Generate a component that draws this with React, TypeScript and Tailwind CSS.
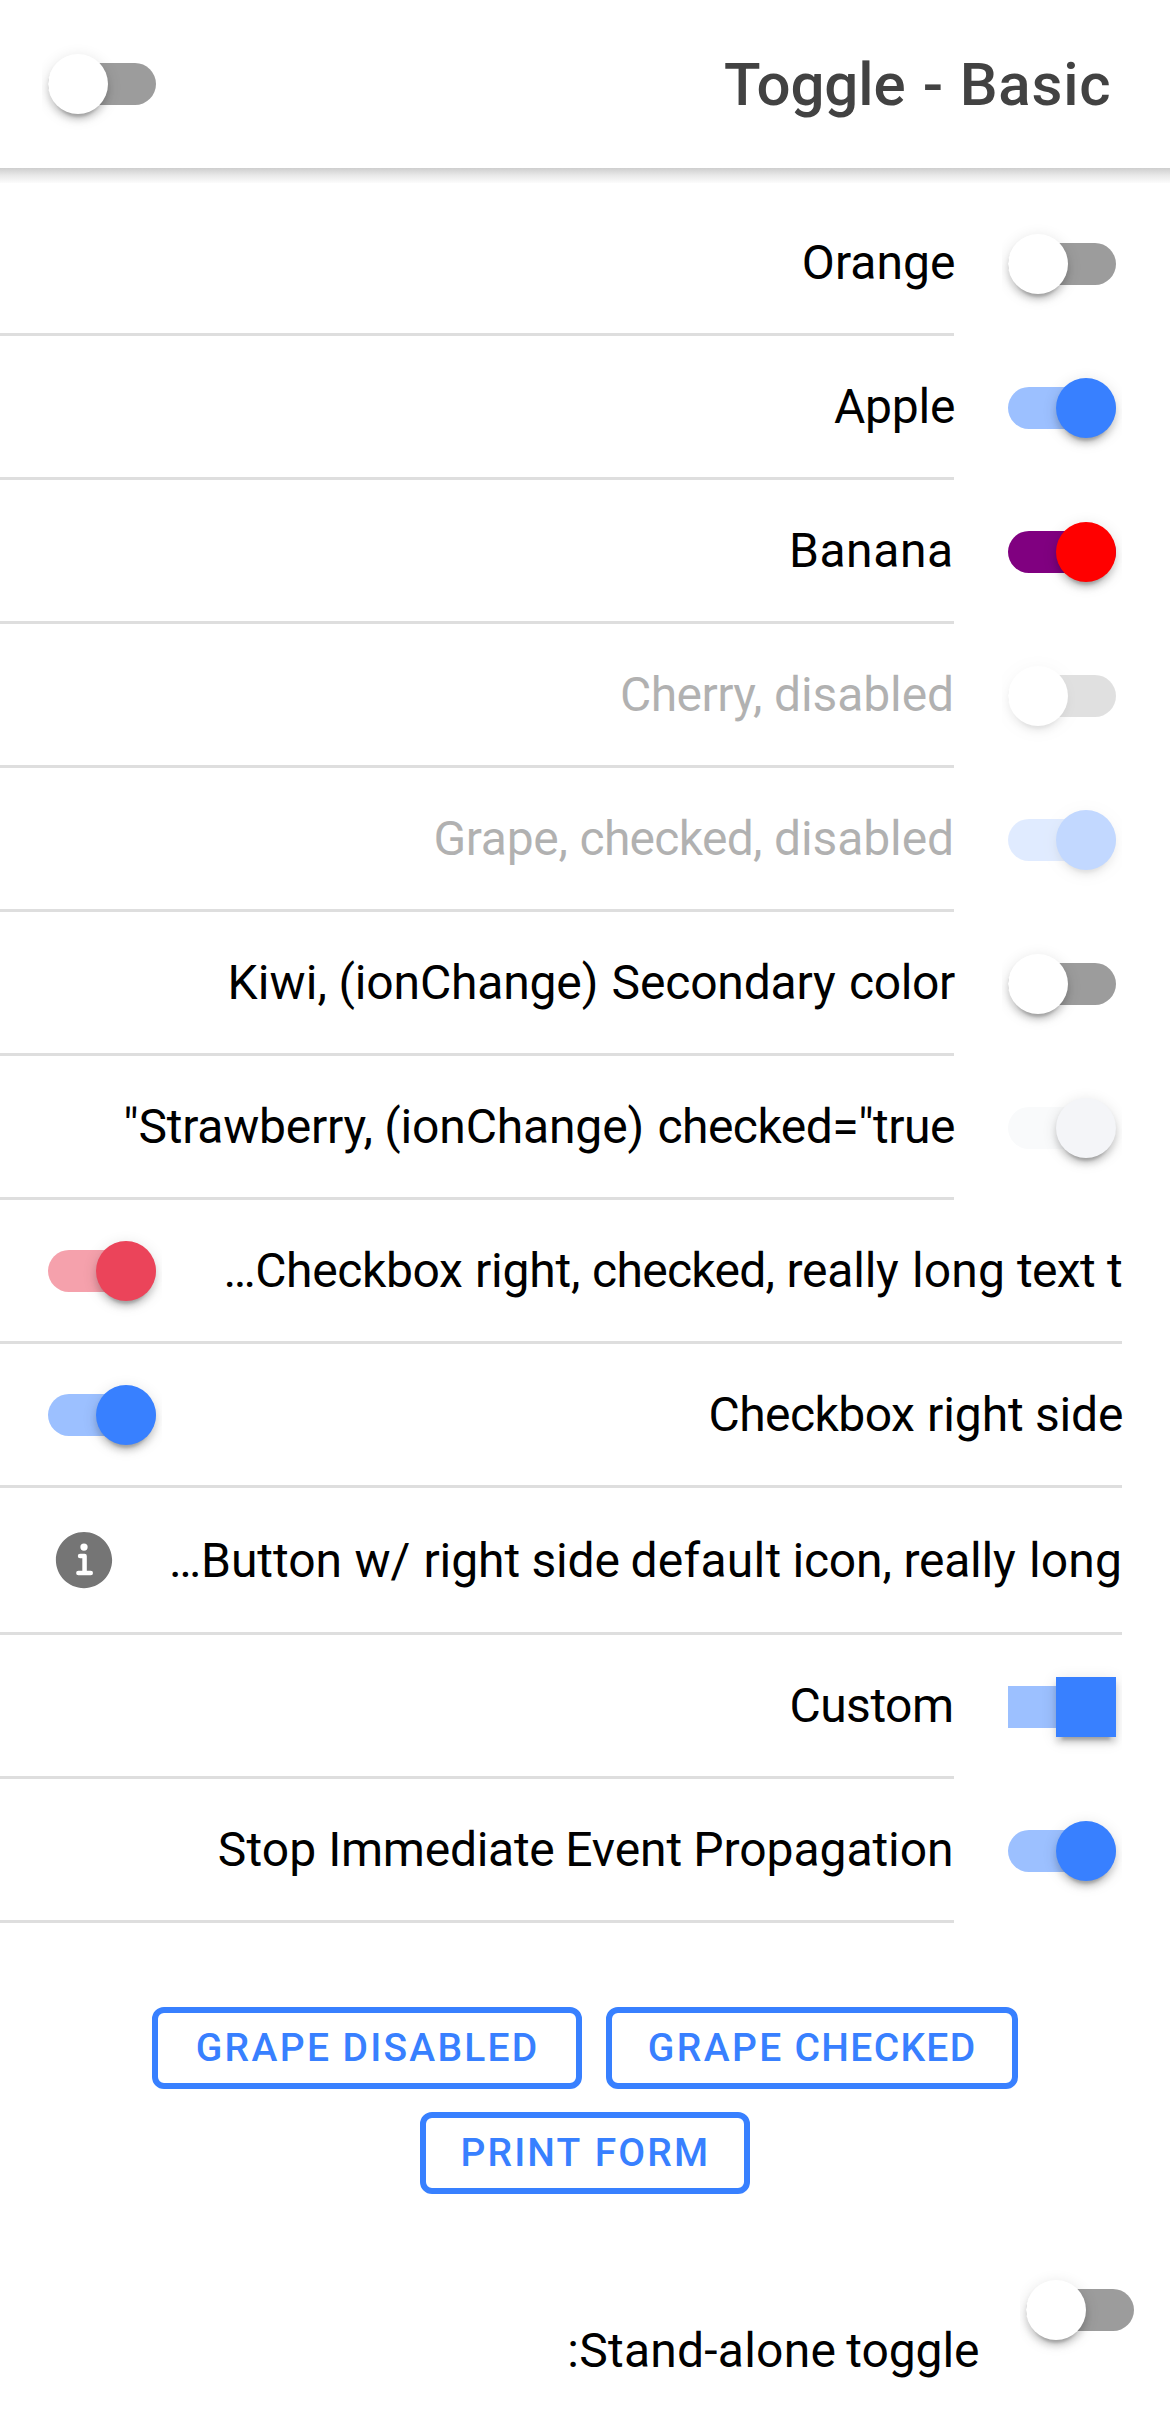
import React from "react";

type Palette = "off" | "primary" | "danger" | "light" | "fancy";

const TRACK: Record<Palette, string> = {
  off: "bg-[#9c9c9c]",
  primary: "bg-[#9cc0ff]",
  danger: "bg-[#f5a1ac]",
  light: "bg-[#f9fafb]",
  fancy: "bg-[#800080]",
};

const KNOB: Record<Palette, string> = {
  off: "bg-white",
  primary: "bg-[#3880ff]",
  danger: "bg-[#eb445a]",
  light: "bg-[#f4f5f8]",
  fancy: "bg-[#ff0000]",
};

/* Roboto advance widths in units of 1/2048 em. */
const REGULAR: Record<string, number> = {
  A: 1336, B: 1275, C: 1333, E: 1164, G: 1394, I: 557, K: 1284, O: 1408, P: 1292, S: 1217,
  a: 1114, b: 1149, c: 1072, d: 1155, e: 1086, f: 711, g: 1149, h: 1128, i: 497, k: 1038,
  l: 497, m: 1795, n: 1130, o: 1168, p: 1149, r: 693, s: 1057, t: 669, u: 1129, v: 992,
  w: 1538, x: 1015, y: 969, ",": 402, "(": 700, ")": 712, "=": 1124, '"': 655, "…": 1370,
  "/": 844, "-": 565, ":": 496,
};

const MEDIUM: Record<string, number> = {
  A: 1358, B: 1300, C: 1336, D: 1328, E: 1158, F: 1120, G: 1396, H: 1449, I: 583, K: 1293,
  L: 1108, M: 1788, N: 1449, O: 1410, P: 1301, R: 1289, S: 1238, T: 1257,
  a: 1108, c: 1070, e: 1098, g: 1160, i: 529, l: 522, o: 1166, s: 1050,
};

const SCALE = 3;

/* Snaps the words of a text to whole-pixel advances at its base size. */
function Fitted({ text, size, widths, tracking = 0 }: { text: string; size: number; widths: Record<string, number>; tracking?: number }) {
  const drift = (ch: string) => {
    const exact = ((widths[ch] ?? 0) * size) / 2048;
    return (Math.round(exact) - exact) * SCALE;
  };
  const words = text.split(" ");
  return (
    <>
      {words.map((word, i) => {
        const chars = Array.from(word);
        const last = drift(chars[chars.length - 1]);
        const rest = chars.slice(0, -1).reduce((sum, ch) => sum + drift(ch), 0);
        const fit = chars.length > 1 ? rest / (chars.length - 1) : 0;
        return (
          <React.Fragment key={i}>
            {i > 0 && " "}
            <span style={{ letterSpacing: `${(tracking + fit).toFixed(3)}px`, marginRight: `${(last - fit).toFixed(3)}px` }}>{word}</span>
          </React.Fragment>
        );
      })}
    </>
  );
}

function Toggle({ palette = "off", disabled = false, square = false }: { palette?: Palette; disabled?: boolean; square?: boolean }) {
  const justify = palette === "off" ? "justify-start" : "justify-end";
  return (
    <div className={`w-[120px] h-[114px] px-[6px] flex items-center shrink-0 overflow-hidden ${disabled ? "opacity-30" : ""}`}>
      <div className={`w-[108px] h-[42px] flex items-center ${justify} ${square ? "" : "rounded-[21px]"} ${TRACK[palette]}`}>
        <div
          className={`size-[60px] shrink-0 shadow-[0_9px_3px_-6px_rgba(0,0,0,0.2),0_6px_6px_0_rgba(0,0,0,0.14),0_3px_15px_0_rgba(0,0,0,0.12)] ${square ? "" : "rounded-full"} ${KNOB[palette]}`}
        />
      </div>
    </div>
  );
}

function Label({ text, disabled = false }: { text: string; disabled?: boolean }) {
  return (
    <span className={`block text-[48px] leading-[56px] whitespace-nowrap text-black ${disabled ? "opacity-30" : ""}`}>
      <Fitted text={text} size={16} widths={REGULAR} />
    </span>
  );
}

/* Row whose toggle sits in the start slot, outside the divider. */
function StartRow({ label, disabled, ...toggle }: { label: string; palette?: Palette; disabled?: boolean; square?: boolean }) {
  return (
    <div className="flex h-[144px] items-center pr-12">
      <div className="flex h-full flex-1 items-center justify-end border-b-[3px] border-[#dedede]">
        <Label text={label} disabled={disabled} />
      </div>
      <div className="ml-12">
        <Toggle disabled={disabled} {...toggle} />
      </div>
    </div>
  );
}

/* Row whose control sits in the end slot, inside the divider. */
function EndRow({ label, children, tall = false }: { label: string; children: React.ReactNode; tall?: boolean }) {
  return (
    <div className={`mr-12 flex items-center justify-between border-b-[3px] border-[#dedede] ${tall ? "h-[147px]" : "h-[144px]"}`}>
      {children}
      <div className={tall ? "pt-0.5" : ""}>
        <Label text={label} />
      </div>
    </div>
  );
}

function OutlineButton({ text, width }: { text: string; width: string }) {
  return (
    <button
      className={`flex h-[81.9px] items-center justify-center rounded-[12px] border-[6px] border-[#3880ff] pt-0.5 text-[39px] leading-none font-medium tracking-[2.34px] whitespace-nowrap text-[#3880ff] ${width}`}
    >
      <span className="block">
        <Fitted text={text} size={13} widths={MEDIUM} tracking={2.34} />
      </span>
    </button>
  );
}

export default function App() {
  return (
    <div className="h-[2427px] w-[1170px] overflow-hidden bg-white font-['Roboto',sans-serif]">
      <header className="flex h-[168px] items-center justify-between pr-[60px] pl-[42px]">
        <Toggle />
        <h1 className="pt-0.5 text-[60px] leading-none font-medium tracking-[0.75px] whitespace-nowrap text-[#424242]">
          <Fitted text="Toggle - Basic" size={20} widths={MEDIUM} tracking={0.75} />
        </h1>
      </header>
      <div className="h-[15px] bg-linear-to-b from-[#cecece] via-[#e9e9e9] to-[#fcfcfc]" />

      <main className="pt-[9px]">
        <StartRow label="Orange" />
        <StartRow label="Apple" palette="primary" />
        <StartRow label="Banana" palette="fancy" />
        <StartRow label="Cherry, disabled" disabled />
        <StartRow label="Grape, checked, disabled" palette="primary" disabled />
        <StartRow label="Kiwi, (ionChange) Secondary color" />
        <StartRow label={'"Strawberry, (ionChange) checked="true'} palette="light" />
        <EndRow label="…Checkbox right, checked, really long text t">
          <div className="ml-[42px] pt-px">
            <Toggle palette="danger" />
          </div>
        </EndRow>
        <EndRow label="Checkbox right side">
          <div className="ml-[42px] pt-px">
            <Toggle palette="primary" />
          </div>
        </EndRow>
        <EndRow label="…Button w/ right side default icon, really long" tall>
          <svg className="ml-12 size-[72px] shrink-0 fill-[#757575]" viewBox="0 0 512 512">
            <path d="M256 56C145.72 56 56 145.72 56 256s89.72 200 200 200 200-89.72 200-200S366.28 56 256 56zm0 82a26 26 0 11-26 26 26 26 0 0126-26zm48 226h-88a16 16 0 010-32h28v-88h-16a16 16 0 010-32h32a16 16 0 0116 16v104h28a16 16 0 010 32z" />
          </svg>
        </EndRow>
        <StartRow label="Custom" palette="primary" square />
        <StartRow label="Stop Immediate Event Propagation" palette="primary" />

        <div className="mt-[84px] flex flex-col items-center gap-[23.1px]">
          <div className="flex gap-6">
            <OutlineButton width="w-[430px]" text="GRAPE DISABLED" />
            <OutlineButton width="w-[412px]" text="GRAPE CHECKED" />
          </div>
          <OutlineButton width="w-[330px]" text="PRINT FORM" />
        </div>

        <div className="mt-[59px] flex items-start justify-end pr-[30px]">
          <div className="mr-[42px] pt-[70px]">
            <Label text=":Stand-alone toggle" />
          </div>
          <Toggle />
        </div>
      </main>
    </div>
  );
}
